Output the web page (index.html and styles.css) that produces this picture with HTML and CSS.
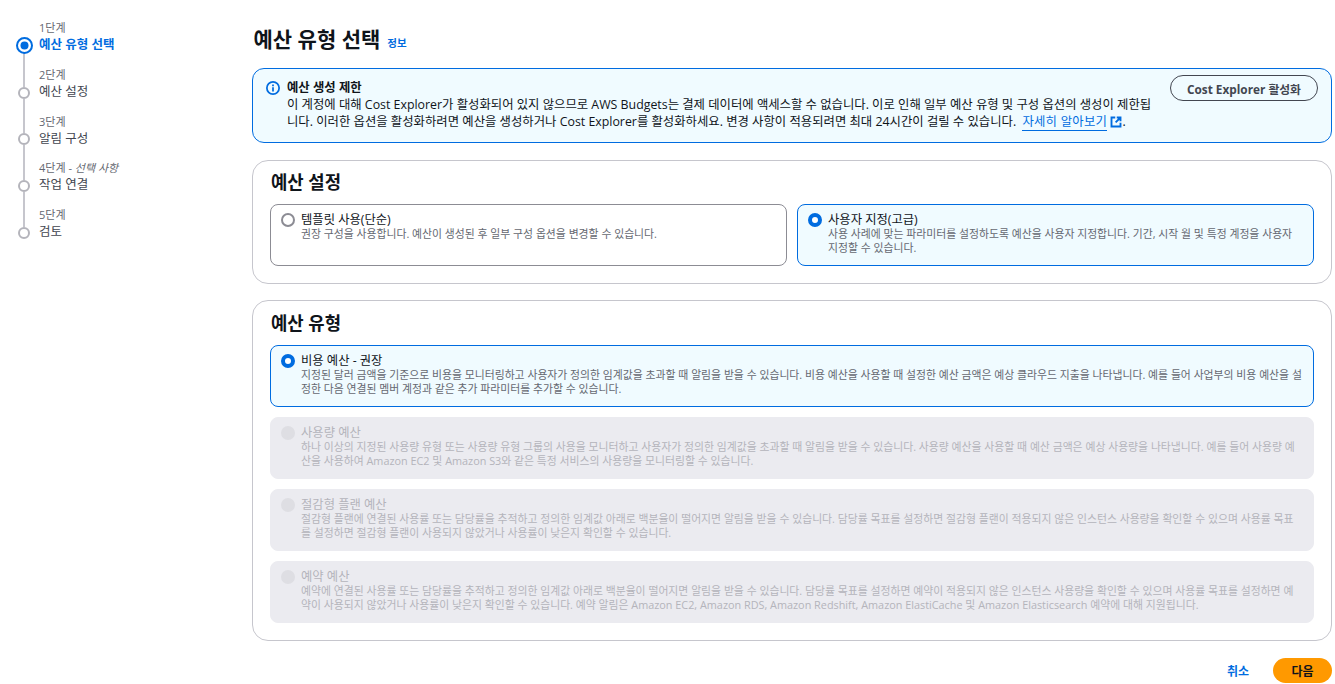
FILE: index.html
```html
<!DOCTYPE html>
<html lang="ko">
<head>
    <meta charset="UTF-8">
    <title>예산 유형 선택</title>
    <link rel="stylesheet" href="styles.css">
</head>
<body>
    <div class="layout">
        <nav class="steps">
            <div class="step active">
                <div class="rail">
                    <svg class="marker-active" width="17" height="17" viewBox="0 0 17 17"><circle cx="8.5" cy="8.5" r="7.5" fill="#fff" stroke="#006ce0" stroke-width="2"/><circle cx="8.5" cy="8.5" r="4" fill="#006ce0"/></svg>
                </div>
                <div class="step-text">
                    <div class="step-no">1단계</div>
                    <div class="step-name">예산 유형 선택</div>
                </div>
            </div>
            <div class="step">
                <div class="rail"><span class="line"></span><span class="dot"></span></div>
                <div class="step-text">
                    <div class="step-no">2단계</div>
                    <div class="step-name">예산 설정</div>
                </div>
            </div>
            <div class="step">
                <div class="rail"><span class="line"></span><span class="dot"></span></div>
                <div class="step-text">
                    <div class="step-no">3단계</div>
                    <div class="step-name">알림 구성</div>
                </div>
            </div>
            <div class="step">
                <div class="rail"><span class="line"></span><span class="dot"></span></div>
                <div class="step-text">
                    <div class="step-no">4단계 - <em>선택 사항</em></div>
                    <div class="step-name">작업 연결</div>
                </div>
            </div>
            <div class="step">
                <div class="rail"><span class="line"></span><span class="dot"></span></div>
                <div class="step-text">
                    <div class="step-no">5단계</div>
                    <div class="step-name">검토</div>
                </div>
            </div>
        </nav>

        <main class="content">
            <div class="page-title">
                <h1>예산 유형 선택</h1>
                <a class="info-link" href="#">정보</a>
            </div>

            <div class="alert">
                <svg class="alert-icon" width="14" height="14" viewBox="0 0 16 16" fill="none" stroke="#006ce0" stroke-width="2"><circle cx="8" cy="8" r="7"/><path d="M8 7v5M8 4v2"/></svg>
                <div class="alert-text">
                    <strong>예산 생성 제한</strong><br>
                    이 계정에 대해 Cost Explorer가 활성화되어 있지 않으므로 AWS Budgets는 결제 데이터에 액세스할 수 없습니다. 이로 인해 일부 예산 유형 및 구성 옵션의 생성이 제한됩<br>
                    니다. 이러한 옵션을 활성화하려면 예산을 생성하거나 Cost Explorer를 활성화하세요. 변경 사항이 적용되려면 최대 24시간이 걸릴 수 있습니다. <a class="ext-link" href="#">자세히 알아보기</a>
                    <svg class="ext-icon" width="12" height="12" viewBox="0 0 16 16" fill="none" stroke="#006ce0" stroke-width="2.5"><path d="M7 2H2v12h12V9M9 2h5v5M14 2L7.5 8.5"/></svg>.
                </div>
                <button class="btn-outline">Cost Explorer 활성화</button>
            </div>

            <section class="card">
                <h2>예산 설정</h2>
                <div class="tile-row">
                    <div class="tile">
                        <span class="radio"></span>
                        <div>
                            <div class="tile-title">템플릿 사용(단순)</div>
                            <div class="tile-desc">권장 구성을 사용합니다. 예산이 생성된 후 일부 구성 옵션을 변경할 수 있습니다.</div>
                        </div>
                    </div>
                    <div class="tile selected">
                        <span class="radio"></span>
                        <div>
                            <div class="tile-title">사용자 지정(고급)</div>
                            <div class="tile-desc">사용 사례에 맞는 파라미터를 설정하도록 예산을 사용자 지정합니다. 기간, 시작 월 및 특정 계정을 사용자<br>지정할 수 있습니다.</div>
                        </div>
                    </div>
                </div>
            </section>

            <section class="card card-types">
                <h2>예산 유형</h2>
                <div class="tile-list">
                    <div class="tile selected">
                        <span class="radio"></span>
                        <div>
                            <div class="tile-title">비용 예산 - 권장</div>
                            <div class="tile-desc">지정된 달러 금액을 기준으로 비용을 모니터링하고 사용자가 정의한 임계값을 초과할 때 알림을 받을 수 있습니다. 비용 예산을 사용할 때 설정한 예산 금액은 예상 클라우드 지출을 나타냅니다. 예를 들어 사업부의 비용 예산을 설<br>정한 다음 연결된 멤버 계정과 같은 추가 파라미터를 추가할 수 있습니다.</div>
                        </div>
                    </div>
                    <div class="tile disabled">
                        <span class="radio"></span>
                        <div>
                            <div class="tile-title">사용량 예산</div>
                            <div class="tile-desc">하나 이상의 지정된 사용량 유형 또는 사용량 유형 그룹의 사용을 모니터하고 사용자가 정의한 임계값을 초과할 때 알림을 받을 수 있습니다. 사용량 예산을 사용할 때 예산 금액은 예상 사용량을 나타냅니다. 예를 들어 사용량 예<br>산을 사용하여 Amazon EC2 및 Amazon S3와 같은 특정 서비스의 사용량을 모니터링할 수 있습니다.</div>
                        </div>
                    </div>
                    <div class="tile disabled">
                        <span class="radio"></span>
                        <div>
                            <div class="tile-title">절감형 플랜 예산</div>
                            <div class="tile-desc">절감형 플랜에 연결된 사용률 또는 담당률을 추적하고 정의한 임계값 아래로 백분율이 떨어지면 알림을 받을 수 있습니다. 담당률 목표를 설정하면 절감형 플랜이 적용되지 않은 인스턴스 사용량을 확인할 수 있으며 사용률 목표<br>를 설정하면 절감형 플랜이 사용되지 않았거나 사용률이 낮은지 확인할 수 있습니다.</div>
                        </div>
                    </div>
                    <div class="tile disabled">
                        <span class="radio"></span>
                        <div>
                            <div class="tile-title">예약 예산</div>
                            <div class="tile-desc">예약에 연결된 사용률 또는 담당률을 추적하고 정의한 임계값 아래로 백분율이 떨어지면 알림을 받을 수 있습니다. 담당률 목표를 설정하면 예약이 적용되지 않은 인스턴스 사용량을 확인할 수 있으며 사용률 목표를 설정하면 예<br>약이 사용되지 않았거나 사용률이 낮은지 확인할 수 있습니다. 예약 알림은 Amazon EC2, Amazon RDS, Amazon Redshift, Amazon ElastiCache 및 Amazon Elasticsearch 예약에 대해 지원됩니다.</div>
                        </div>
                    </div>
                </div>
            </section>

            <div class="actions">
                <a class="cancel" href="#">취소</a>
                <button class="btn-primary">다음</button>
            </div>
        </main>
    </div>
</body>
</html>
```

FILE: styles.css
```css
* {
    box-sizing: border-box;
}

body {
    margin: 0;
    font-family: "Open Sans", "Noto Sans CJK KR", sans-serif;
    font-size: 14px;
    color: #0f141a;
    background: #fff;
    overflow: hidden;
}

.layout {
    display: flex;
    height: 684px;
    padding-right: 3px;
}

/* left stepper */
.steps {
    width: 252px;
    flex-shrink: 0;
    padding: 21px 0 0 15px;
}

.step {
    display: flex;
    height: 46.75px;
}

.rail {
    width: 18px;
    height: 46.75px;
    margin: -16px 6px 0 0;
    display: flex;
    flex-direction: column;
    align-items: center;
    justify-content: flex-end;
}

.marker-active {
    margin-bottom: -2px;
    position: relative;
}

.line {
    width: 2px;
    flex: 1;
    background: #c6c6cd;
}

.dot {
    width: 12px;
    height: 12px;
    border: 2px solid #b4b4bb;
    border-radius: 50%;
    background: #fff;
}

.step-text {
    white-space: nowrap;
}

.step-no {
    font-size: 11px;
    line-height: 14px;
    color: #656871;
}

.step-name {
    font-size: 12.5px;
    line-height: 19px;
    color: #424650;
}

.step.active .step-name {
    color: #006ce0;
    font-weight: 700;
}

/* main column */
.content {
    flex: 1;
    min-width: 0;
}

.page-title {
    display: flex;
    align-items: baseline;
    gap: 7px;
    height: 68px;
    padding: 26px 0 0 1.5px;
}

h1 {
    margin: 0;
    font-size: 21px;
    line-height: 26px;
    font-weight: 700;
}

.info-link {
    font-size: 10.5px;
    font-weight: 700;
    color: #006ce0;
    text-decoration: none;
}

.alert {
    display: flex;
    height: 75px;
    padding: 10px 13px 0;
    border: 1px solid #006ce0;
    border-radius: 12px;
    background: #f0fbff;
}

.alert-icon {
    margin: 2px 7px 0 0;
    flex-shrink: 0;
}

.alert-text {
    flex: 1;
    font-size: 12.36px;
    line-height: 17px;
    white-space: nowrap;
}

.ext-link {
    margin-left: 3px;
    letter-spacing: 0.25px;
    color: #006ce0;
    text-decoration: none;
    border-bottom: 1px solid #006ce0;
}

.ext-icon {
    vertical-align: -2px;
}

.btn-outline {
    height: 26px;
    width: 148px;
    padding: 0;
    margin-top: -4px;
    border: 1px solid #424650;
    border-radius: 13px;
    background: transparent;
    color: #424650;
    font-family: inherit;
    font-size: 11.8px;
    font-weight: 700;
    flex-shrink: 0;
}

.card {
    border: 1px solid #c6c6cd;
    border-radius: 16px;
    padding: 11px 17px 17px;
    margin-top: 17px;
}

.card-types {
    margin-top: 16px;
    padding-top: 12px;
}

.card h2 {
    margin: 0 0 11px;
    padding-left: 1px;
    font-size: 17.8px;
    line-height: 21px;
    font-weight: 700;
}

.tile-row {
    display: grid;
    grid-template-columns: 1fr 1fr;
    gap: 10px;
}

.tile-list {
    display: flex;
    flex-direction: column;
    gap: 10px;
}

.tile {
    display: flex;
    gap: 6px;
    height: 62px;
    padding: 7px 10px;
    border: 1px solid #8c8c94;
    border-radius: 8px;
    background: #fff;
}

.radio {
    width: 14px;
    height: 14px;
    margin-top: 1px;
    border: 2px solid #8c8c94;
    border-radius: 50%;
    flex-shrink: 0;
}

.tile-title {
    font-size: 12.3px;
    line-height: 15px;
    white-space: nowrap;
}

.tile-desc {
    font-size: 10.85px;
    line-height: 14.2px;
    color: #656871;
    white-space: nowrap;
}

.tile.selected {
    border-color: #006ce0;
    background: #f0fbff;
}

.tile.selected .radio {
    border: 4px solid #006ce0;
    background: #fff;
}

.tile.disabled {
    border-color: #ebebf0;
    background: #ebebf0;
}

.tile.disabled .radio {
    border-color: #dedee3;
    background: #dedee3;
}

.tile.disabled .tile-title,
.tile.disabled .tile-desc {
    color: #b4b4bb;
}

.actions {
    display: flex;
    justify-content: flex-end;
    align-items: center;
    gap: 24px;
    margin-top: 17px;
}

.cancel {
    font-size: 12px;
    font-weight: 700;
    color: #006ce0;
    text-decoration: none;
}

.btn-primary {
    width: 59px;
    height: 25px;
    border: none;
    border-radius: 13px;
    background: #ff9900;
    color: #0f141a;
    font-family: inherit;
    font-size: 12px;
    font-weight: 700;
}
```
